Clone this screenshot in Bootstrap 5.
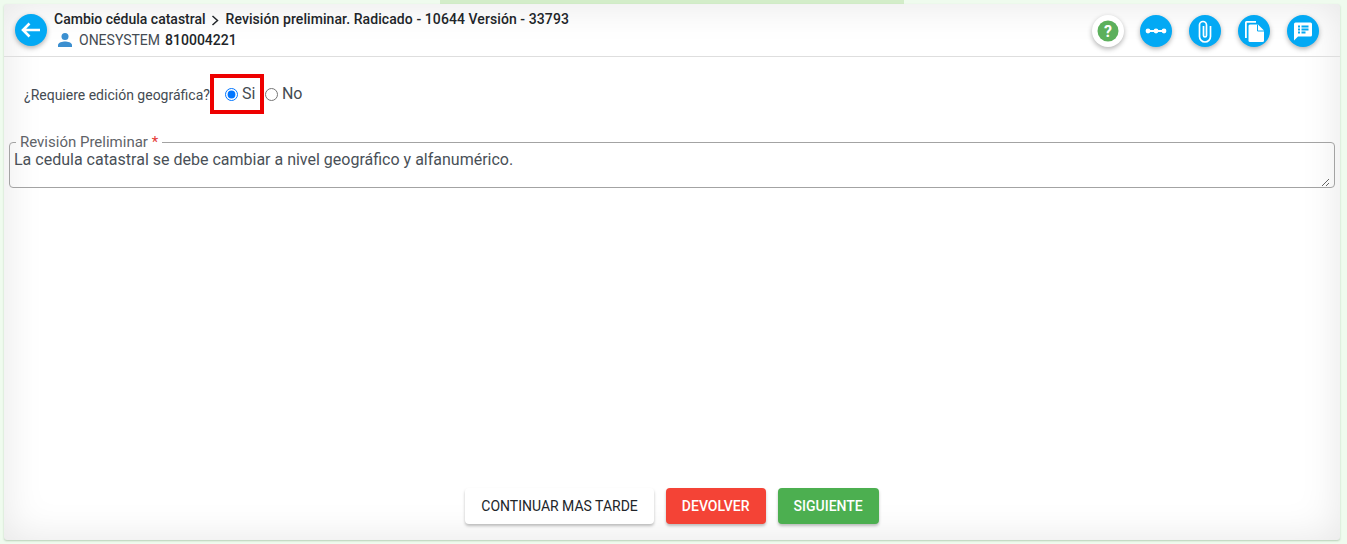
<!DOCTYPE html>
<html lang="es">
<head>
    <meta charset="UTF-8">
    <meta name="viewport" content="width=device-width, initial-scale=1.0">
    <title>Revisión preliminar</title>
    <link href="https://cdn.jsdelivr.net/npm/bootstrap@5.3.0/dist/css/bootstrap.min.css" rel="stylesheet">
    <style>
        html, body {
            height: 100%;
        }
        body {
            background: #effbee;
            font-family: Roboto, "Liberation Sans", sans-serif;
            color: #212529;
            overflow: hidden;
        }
        .top-strip {
            width: 464px;
            height: 4px;
            margin-left: 440px;
            background: #d3edc9;
        }
        .panel-box {
            width: 1336px;
            height: 536px;
            margin-left: 4px;
            background: #fff;
            border-radius: 3px;
            box-shadow: inset 0 0 40px rgba(0, 0, 0, .1), 0 1px 2px rgba(80, 120, 80, .35);
        }
        .panel-head {
            height: 53px;
            padding: 0 21px 0 11px;
            border-bottom: 1px solid #dedede;
        }
        .back-btn {
            margin-right: 7px;
        }
        .head-title {
            font-size: 14px;
            font-weight: 500;
            line-height: 20px;
            color: #212529;
            margin-top: 5px;
        }
        .head-title svg {
            margin: 0 2px;
        }
        .head-title span {
            letter-spacing: .08px;
        }
        .head-user {
            font-size: 14px;
            line-height: 20px;
            color: #444b52;
            margin-top: 1px;
        }
        .head-user svg {
            margin: 0 6px 0 3px;
        }
        .head-user b {
            font-weight: 500;
            color: #212529;
            margin-left: 5px;
        }
        .round-btn {
            width: 32px;
            height: 32px;
            border-radius: 50%;
            background: #03a9f4;
            border: 0;
            padding: 0;
            box-shadow: 0 2px 5px rgba(0, 0, 0, .3);
            flex: none;
        }
        .round-white {
            background: #fff;
            margin-right: -1px;
        }
        .round-row {
            gap: 17px;
            margin-top: 1px;
        }
        .geo-row {
            height: 60px;
            padding-left: 20px;
            margin-top: 17px;
        }
        .geo-label {
            font-size: 14px;
            color: #444b52;
            margin-top: 3px;
        }
        .red-frame {
            border: 4px solid #ee0000;
            width: 54px;
            height: 40px;
            padding-left: 11px;
            flex: none;
        }
        .radio-text {
            font-size: 16px;
            color: #444b52;
            margin-left: 4px;
        }
        .radio-dot {
            width: 13px;
            height: 13px;
            margin: 0;
            accent-color: #0075ff;
            flex: none;
        }
        .no-radio {
            height: 40px;
            margin-left: 1px;
        }
        .field-set {
            margin: 0 5px;
            height: 54px;
            border: 1px solid #a3a3a3;
            border-radius: 4px;
            padding: 0 4px;
        }
        .field-set legend {
            float: none;
            width: auto;
            font-size: 15px;
            line-height: 16px;
            margin: 0 0 0 2px;
            padding: 0 4px;
            color: #5f6368;
        }
        .field-set legend span {
            color: #e53935;
        }
        .field-set textarea {
            display: block;
            width: 100%;
            height: 37px;
            border: 0;
            outline: 0;
            padding: 0;
            background: transparent;
            font-size: 16px;
            line-height: 19px;
            color: #495057;
            resize: vertical;
        }
        .foot-row {
            gap: 12px;
            padding-bottom: 16px;
        }
        .foot-btn {
            height: 36px;
            padding: 0 16px;
            border: 0;
            border-radius: 4px;
            font-size: 14px;
            font-weight: 500;
            box-shadow: 0 2px 3px rgba(0, 0, 0, .25);
        }
        .foot-later {
            background: #fff;
            color: #212529;
            font-weight: 400;
        }
        .foot-back {
            background: #f44336;
            color: #fff;
        }
        .foot-next {
            background: #4caf50;
            color: #fff;
        }
    </style>
</head>
<body>
    <div class="top-strip"></div>
    <div class="panel-box d-flex flex-column">
        <div class="panel-head d-flex align-items-center">
            <button class="round-btn back-btn" type="button" aria-label="Volver">
                <svg width="32" height="32" viewBox="0 0 32 32"><path d="M25 16H9M14.500 9.500 8 16l6.500 6.500" fill="none" stroke="#fff" stroke-width="2.600"/></svg>
            </button>
            <div class="flex-grow-1 align-self-start">
                <div class="head-title">Cambio cédula catastral
                    <svg width="9" height="11" viewBox="0 0 9 11"><path d="M1.500 1 6.500 5.500 1.500 10" fill="none" stroke="#212529" stroke-width="1.500"/></svg>
                    <span>Revisión preliminar. Radicado - 10644 Versión - 33793</span></div>
                <div class="head-user d-flex align-items-center">
                    <svg width="16" height="16" viewBox="0 0 16 16"><circle cx="8" cy="4.500" r="3.500" fill="#3b8fd0"/><path d="M1 15v-2c0-2.500 4.500-3.600 7-3.600s7 1.100 7 3.600v2z" fill="#3b8fd0"/></svg>
                    <span>ONESYSTEM</span><b>810004221</b>
                </div>
            </div>
            <div class="d-flex round-row">
                <button class="round-btn round-white" type="button" aria-label="Ayuda">
                    <svg width="32" height="32" viewBox="0 0 32 32"><circle cx="16" cy="16" r="10.500" fill="#5cb05c"/><text x="16" y="21.500" text-anchor="middle" font-size="16" font-weight="700" fill="#fff" font-family="Roboto">?</text></svg>
                </button>
                <button class="round-btn" type="button" aria-label="Flujo">
                    <svg width="32" height="32" viewBox="0 0 32 32"><path d="M8 16h16" stroke="#fff" stroke-width="2"/><circle cx="8" cy="16" r="2.400" fill="#fff"/><circle cx="16" cy="16" r="2.400" fill="#fff"/><circle cx="24" cy="16" r="2.400" fill="#fff"/></svg>
                </button>
                <button class="round-btn" type="button" aria-label="Adjuntos">
                    <svg width="32" height="32" viewBox="0 0 32 32"><path d="M21.500 11v10.500a5.500 5.500 0 0 1-11 0V10a3.500 3.500 0 0 1 7 0v10.500a1.500 1.500 0 0 1-3 0V11" fill="none" stroke="#fff" stroke-width="1.700"/></svg>
                </button>
                <button class="round-btn" type="button" aria-label="Documentos">
                    <svg width="32" height="32" viewBox="0 0 32 32"><path d="M7 7.500A1.500 1.500 0 0 1 8.500 6H18v1.800H8.800V23H7z" fill="#fff"/><path d="M12 9.500h8l6 6v10a1.500 1.500 0 0 1-1.500 1.500H12a1.500 1.500 0 0 1-1.500-1.500V11A1.500 1.500 0 0 1 12 9.500z" fill="#fff"/><path d="M19.500 9.500v6.500H26" fill="none" stroke="#03a9f4" stroke-width="1"/></svg>
                </button>
                <button class="round-btn" type="button" aria-label="Comentarios">
                    <svg width="32" height="32" viewBox="0 0 32 32"><path d="M8.500 7.500h15A1.500 1.500 0 0 1 25 9v11a1.500 1.500 0 0 1-1.500 1.500H11L7 25.500V9a1.500 1.500 0 0 1 1.500-1.500z" fill="#fff"/><path d="M11 11.500h2M14.500 11.500h7M11 14.500h2M14.500 14.500h7M11 17.500h2M14.500 17.500h4" stroke="#03a9f4" stroke-width="1.800"/></svg>
                </button>
            </div>
        </div>

        <div class="geo-row d-flex">
            <div class="geo-label align-self-start pt-2">¿Requiere edición geográfica?</div>
            <div class="d-flex align-items-start">
                <label class="red-frame d-flex align-items-center">
                    <input class="radio-dot" type="radio" name="geo" checked>
                    <span class="radio-text">Si</span>
                </label>
                <label class="d-flex align-items-center no-radio">
                    <input class="radio-dot" type="radio" name="geo">
                    <span class="radio-text">No</span>
                </label>
            </div>
        </div>

        <fieldset class="field-set">
            <legend>Revisión Preliminar <span>*</span></legend>
            <textarea>La cedula catastral se debe cambiar a nivel geográfico y alfanumérico.</textarea>
        </fieldset>

        <div class="foot-row d-flex justify-content-center mt-auto">
            <button class="foot-btn foot-later" type="button">CONTINUAR MAS TARDE</button>
            <button class="foot-btn foot-back" type="button">DEVOLVER</button>
            <button class="foot-btn foot-next" type="button">SIGUIENTE</button>
        </div>
    </div>
    <script src="https://cdn.jsdelivr.net/npm/bootstrap@5.3.0/dist/js/bootstrap.bundle.min.js"></script>
</body>
</html>
